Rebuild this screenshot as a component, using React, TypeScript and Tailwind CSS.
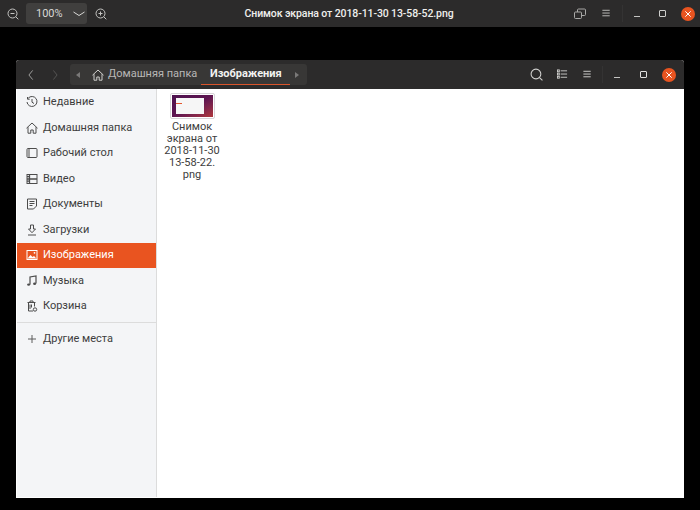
import type { ReactNode } from "react";

function Ico({ size = 12, children, className = "" }: { size?: number; children: ReactNode; className?: string }) {
  return (
    <svg
      width={size}
      height={size}
      viewBox="0 0 12 12"
      fill="none"
      stroke="currentColor"
      strokeWidth="1"
      className={`shrink-0 ${className}`}
      aria-hidden
    >
      {children}
    </svg>
  );
}

const SIDEBAR: { label: string; icon: ReactNode; active?: boolean }[] = [
  {
    label: "Недавние",
    icon: (
      <>
        <path d="M2.200 2.200A5 5 0 1 1 1 6" />
        <path d="M1.500 1v2.200h2.200M6 3v3.200l2 1.300" />
      </>
    ),
  },
  {
    label: "Домашняя папка",
    icon: (
      <>
        <path d="M.5 6.200 6 1l5.500 5.200" />
        <path d="M2 5.200v6h2.800V8h2.400v3.200H10v-6" />
      </>
    ),
  },
  {
    label: "Рабочий стол",
    icon: (
      <>
        <rect x="1" y="1.500" width="10" height="9" rx="1" />
        <path d="M3 1.500v9" />
      </>
    ),
  },
  {
    label: "Видео",
    icon: (
      <>
        <rect x="1" y="1.500" width="10" height="9" />
        <path d="M3.500 1.500v9M1 6h10M1 3.700h2.500M1 8.200h2.500" strokeWidth="1.300" />
      </>
    ),
  },
  {
    label: "Документы",
    icon: (
      <>
        <path d="M1.500 1h9v7l-3 3h-6z" />
        <path d="M3.500 3.500h5M3.500 5.500h5M3.500 7.500h3" />
      </>
    ),
  },
  {
    label: "Загрузки",
    icon: (
      <>
        <path d="M4.500 1h3v4h2L6 8.700 2.500 5h2z" />
        <path d="M2 11h8" />
      </>
    ),
  },
  {
    label: "Изображения",
    active: true,
    icon: (
      <>
        <rect x="1" y="1.500" width="10" height="9" />
        <path d="m1.500 9.500 3-3.500 2 2 1.500-1 2.500 2.500z" fill="currentColor" stroke="none" />
        <circle cx="8.500" cy="3.800" r=".9" fill="currentColor" stroke="none" />
      </>
    ),
  },
  {
    label: "Музыка",
    icon: (
      <>
        <path d="M4 9.500V2l6-1v7.500" strokeWidth="1.200" />
        <ellipse cx="2.600" cy="9.600" rx="1.500" ry="1.200" fill="currentColor" stroke="none" />
        <ellipse cx="8.600" cy="8.800" rx="1.500" ry="1.200" fill="currentColor" stroke="none" />
      </>
    ),
  },
  {
    label: "Корзина",
    icon: (
      <>
        <path d="M1.500 2.500h8M4 2.500V1h3v1.500M2.500 2.500v8.500h4.500" />
        <path d="M8.500 2.500v4M4 4.500v4.500M5.500 4.500v3" />
        <circle cx="9" cy="9.500" r="1.700" />
      </>
    ),
  },
];

function ThumbFile() {
  return (
    <div className="flex w-[52px] flex-col items-center">
      <div className="h-[26px] w-[45px] rounded-[2px] border border-[#d8d4d8] bg-white p-px">
        <div className="flex h-full w-full items-center bg-gradient-to-br from-[#4e124f] via-[#5e1450] to-[#b0363a] pl-[4px]">
          <div className="flex h-[16px] w-[28px] bg-[#f6f6f6]">
            <div className="mt-[5px] h-[1px] w-[6px] bg-[#e4572e]" />
          </div>
        </div>
      </div>
      <div className="mt-[2px] w-[60px] text-center text-[11px] leading-[12px] text-[#3d3d3d]">
        Снимок
        <br />
        экрана от
        <br />
        2018-11-30
        <br />
        13-58-22.
        <br />
        png
      </div>
    </div>
  );
}

function Hamburger({ className = "" }: { className?: string }) {
  return (
    <Ico size={11} className={className}>
      <path d="M1.500 2.500h8M1.500 5.500h8M1.500 8.500h8" />
    </Ico>
  );
}

function CloseDot({ size }: { size: number }) {
  return (
    <div
      className="flex items-center justify-center rounded-full bg-[#e95420] text-white"
      style={{ width: size, height: size }}
    >
      <Ico size={8}>
        <path d="m2 2 8 8M10 2l-8 8" strokeWidth="1.500" />
      </Ico>
    </div>
  );
}

export default function App() {
  return (
    <div className="flex h-[510px] w-[700px] flex-col overflow-hidden bg-black font-['Roboto',sans-serif]">
      {/* viewer toolbar */}
      <div className="flex h-[27px] shrink-0 items-center bg-[#2c2b2b] text-[#d8d8d6]">
        <Ico size={12} className="ml-[7px] text-[#c4c4c2]">
          <circle cx="5.500" cy="5.500" r="4.500" />
          <path d="m8.800 8.800 2.500 2.500M3.500 5.500h4" />
        </Ico>
        <div className="ml-[7px] flex h-[21px] w-[61px] items-center rounded-[3px] bg-[#403f3e] pl-[10px] pt-px text-[11px]">
          100%
          <svg width="12" height="6" viewBox="0 0 12 6" fill="none" stroke="currentColor" className="ml-[10px]" aria-hidden>
            <path d="m.5 1 5.500 3.500L11.500 1" />
          </svg>
        </div>
        <Ico size={12} className="ml-[8px] text-[#c4c4c2]">
          <circle cx="5.500" cy="5.500" r="4.500" />
          <path d="m8.800 8.800 2.500 2.500M3.500 5.500h4M5.500 3.500v4" />
        </Ico>
        <div className="ml-[134px] w-[216px] shrink-0 whitespace-nowrap pt-px text-center text-[10.500px] font-medium tracking-[-0.1px] text-[#efefed]">
          Снимок экрана от 2018-11-30 13-58-52.png
        </div>
        <Ico size={12} className="ml-[117px] text-[#a9a9a7]">
          <rect x="3.500" y="1" width="8" height="6.500" rx="1" />
          <rect x=".5" y="4" width="7" height="6.500" rx="1" fill="#2c2b2b" />
        </Ico>
        <Hamburger className="ml-[15px] text-[#c4c4c2]" />
        <div className="ml-[10px] h-[17px] w-px bg-[#343333]" />
        <div className="ml-[11px] h-px w-[6px] translate-y-[3px] bg-[#c4c4c2]" />
        <div className="ml-[19px] h-[7px] w-[7px] rounded-[1px] border border-[#d0d0ce]" />
        <div className="ml-[15px]">
          <CloseDot size={14} />
        </div>
      </div>

      {/* files window */}
      <div className="ml-[16px] mt-[33px] flex h-[438px] w-[668px] flex-col overflow-hidden rounded-t-[3px] bg-white">
        <div className="flex h-[29px] shrink-0 items-center bg-[#2c2b2b] text-[#d8d8d6]">
          <Ico size={10} className="ml-[10px] text-[#b5b5b3]">
            <path d="M8 .5 3.500 6 8 11.500" />
          </Ico>
          <Ico size={10} className="ml-[14px] text-[#5e5d5c]">
            <path d="M4 .5 8.500 6 4 11.500" />
          </Ico>
          <div className="relative ml-[10px] flex h-[21px] w-[237px] shrink-0 items-center rounded-[3px] bg-[#383736] text-[11px]">
            <div className="ml-[6px] h-0 w-0 border-y-[3.500px] border-r-[4px] border-y-transparent border-r-[#7a7978]" />
            <Ico size={12} className="ml-[12px] text-[#cfcfcd]">
              <path d="M.5 6.200 6 1l5.500 5.200" />
              <path d="M2 5.200v6h2.800V8h2.400v3.200H10v-6" />
            </Ico>
            <span className="ml-[4px] w-[102px] shrink-0 whitespace-nowrap text-[#b9b8b6]">Домашняя папка</span>
            <span className="w-[85px] shrink-0 whitespace-nowrap font-bold text-[#f2f2f0]">Изображения</span>
            <div className="h-0 w-0 border-y-[3.500px] border-l-[4px] border-y-transparent border-l-[#7a7978]" />
            <div className="absolute bottom-0 left-[131px] h-[1.500px] w-[89px] bg-[#d9542b]" />
          </div>
          <Ico size={13} className="ml-[223px] text-[#d0d0ce]">
            <circle cx="5.500" cy="5.500" r="4.500" />
            <path d="m8.800 8.800 2.700 2.700" />
          </Ico>
          <Ico size={11} className="ml-[14px] text-[#cfcfcd]">
            <path d="M4 2h7M4 5.500h7M4 9h7" />
            <rect x=".5" y="1" width="2" height="2" />
            <rect x=".5" y="4.500" width="2" height="2" />
            <rect x=".5" y="8" width="2" height="2" />
          </Ico>
          <Hamburger className="ml-[14px] text-[#d8d8d6]" />
          <div className="ml-[9px] h-[17px] w-px bg-[#343333]" />
          <div className="ml-[11px] h-px w-[6px] translate-y-[3px] bg-[#c4c4c2]" />
          <div className="ml-[20px] h-[7px] w-[7px] rounded-[1px] border border-[#e0e0de]" />
          <div className="ml-[15px]">
            <CloseDot size={14} />
          </div>
        </div>

        <div className="flex min-h-0 flex-1 pb-[1px] pl-[1px]">
          <div className="w-[140px] shrink-0 border-r border-[#dcdcdc] bg-[#f4f5f7] pt-[0.5px] text-[11px] text-[#3d3d3d]">
            {SIDEBAR.map((item) => (
              <div
                key={item.label}
                className={`flex h-[25.500px] items-center pl-[9px] ${
                  item.active ? "bg-[#e95420] text-white" : ""
                }`}
              >
                <Ico size={12} className={item.active ? "text-white" : "text-[#4c4c4c]"}>
                  {item.icon}
                </Ico>
                <span className="ml-[5px] whitespace-nowrap">{item.label}</span>
              </div>
            ))}
            <div className="my-[3px] h-px bg-[#dcdcdc]" />
            <div className="flex h-[25.500px] items-center pl-[9px]">
              <Ico size={12} className="text-[#5c5c5c]">
                <path d="M6 2v8M2 6h8" />
              </Ico>
              <span className="ml-[5px] whitespace-nowrap">Другие места</span>
            </div>
          </div>
          <div className="min-w-0 flex-1 pl-[9px] pt-[4px]">
            <ThumbFile />
          </div>
        </div>
      </div>
    </div>
  );
}
